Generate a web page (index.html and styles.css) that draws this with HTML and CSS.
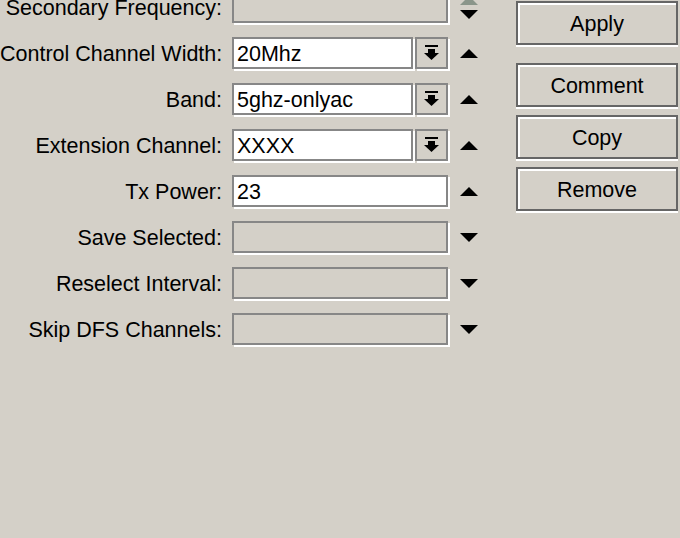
FILE: index.html
```html
<!DOCTYPE html>
<html lang="en">
<head>
    <meta charset="UTF-8">
    <meta name="viewport" content="width=device-width, initial-scale=1.0">
    <title>Wireless - Channels</title>
    <link rel="stylesheet" href="styles.css">
</head>
<body>
    <div class="dialog">
        <div class="fields">
            <div class="row">
                <span class="label">Secondary Frequency:</span>
                <div class="field disabled"></div>
                <div class="spin">
                    <svg class="tri off" viewBox="0 0 18 9"><path d="M9 0L18 9H0z"/></svg>
                    <svg class="tri" viewBox="0 0 18 9"><path d="M0 0H18L9 9z"/></svg>
                </div>
            </div>

            <div class="row">
                <span class="label">Control Channel Width:</span>
                <div class="combo">
                    <div class="field">20Mhz</div>
                    <div class="drop">
                        <svg class="drop-icon" viewBox="0 0 15 16"><rect x="1" y="0" width="13" height="2"/><rect x="4" y="4" width="7" height="4"/><path d="M0 8H15L7.5 15z"/></svg>
                    </div>
                </div>
                <div class="spin">
                    <svg class="tri" viewBox="0 0 18 9"><path d="M9 0L18 9H0z"/></svg>
                </div>
            </div>

            <div class="row">
                <span class="label">Band:</span>
                <div class="combo">
                    <div class="field">5ghz-onlyac</div>
                    <div class="drop">
                        <svg class="drop-icon" viewBox="0 0 15 16"><rect x="1" y="0" width="13" height="2"/><rect x="4" y="4" width="7" height="4"/><path d="M0 8H15L7.5 15z"/></svg>
                    </div>
                </div>
                <div class="spin">
                    <svg class="tri" viewBox="0 0 18 9"><path d="M9 0L18 9H0z"/></svg>
                </div>
            </div>

            <div class="row">
                <span class="label">Extension Channel:</span>
                <div class="combo">
                    <div class="field">XXXX</div>
                    <div class="drop">
                        <svg class="drop-icon" viewBox="0 0 15 16"><rect x="1" y="0" width="13" height="2"/><rect x="4" y="4" width="7" height="4"/><path d="M0 8H15L7.5 15z"/></svg>
                    </div>
                </div>
                <div class="spin">
                    <svg class="tri" viewBox="0 0 18 9"><path d="M9 0L18 9H0z"/></svg>
                </div>
            </div>

            <div class="row">
                <span class="label">Tx Power:</span>
                <div class="field">23</div>
                <div class="spin">
                    <svg class="tri" viewBox="0 0 18 9"><path d="M9 0L18 9H0z"/></svg>
                </div>
            </div>

            <div class="row">
                <span class="label">Save Selected:</span>
                <div class="field disabled"></div>
                <div class="spin">
                    <svg class="tri" viewBox="0 0 18 9"><path d="M0 0H18L9 9z"/></svg>
                </div>
            </div>

            <div class="row">
                <span class="label">Reselect Interval:</span>
                <div class="field disabled"></div>
                <div class="spin">
                    <svg class="tri" viewBox="0 0 18 9"><path d="M0 0H18L9 9z"/></svg>
                </div>
            </div>

            <div class="row">
                <span class="label">Skip DFS Channels:</span>
                <div class="field disabled"></div>
                <div class="spin">
                    <svg class="tri" viewBox="0 0 18 9"><path d="M0 0H18L9 9z"/></svg>
                </div>
            </div>
        </div>

        <div class="buttons">
            <button class="btn btn-apply">Apply</button>
            <button class="btn">Comment</button>
            <button class="btn">Copy</button>
            <button class="btn">Remove</button>
        </div>
    </div>
</body>
</html>
```

FILE: styles.css
```css
/* General Styles */
body {
    margin: 0;
    padding: 0;
    height: 538px;
    overflow: hidden;
    background-color: #d4d0c8;
    font-family: "Liberation Sans", Arial, sans-serif;
    font-size: 21.5px;
    color: #000;
}

.dialog {
    display: flex;
    align-items: flex-start;
}

/* Form rows */
.fields {
    display: flex;
    flex-direction: column;
    gap: 14px;
    margin-top: -9px;
}

.row {
    display: flex;
    align-items: center;
    height: 32px;
}

.label {
    width: 222px;
    padding-right: 10px;
    padding-top: 3px;
    text-align: right;
    white-space: nowrap;
}

.field {
    width: 216px;
    height: 32px;
    box-sizing: border-box;
    border: 2px solid #878787;
    box-shadow: 2px 2px 0 #fff;
    background-color: #fff;
    padding-left: 3px;
    line-height: 31px;
    white-space: nowrap;
}

.field.disabled {
    background-color: #d4d0c8;
}

/* Text field with drop-down button */
.combo {
    display: flex;
    gap: 2px;
    width: 216px;
}

.combo .field {
    width: 181px;
}

.drop {
    width: 33px;
    height: 32px;
    box-sizing: border-box;
    border: 2px solid #878787;
    box-shadow: 2px 2px 0 #fff;
    display: flex;
    align-items: center;
    justify-content: center;
}

.drop-icon {
    width: 15px;
    height: 16px;
    fill: #000;
}

/* Up / down arrows */
.spin {
    display: flex;
    flex-direction: column;
    gap: 5px;
    margin-left: 12px;
}

.tri {
    display: block;
    width: 18px;
    height: 9px;
    fill: #000;
}

.tri.off {
    fill: #8a958a;
}

/* Buttons */
.buttons {
    display: flex;
    flex-direction: column;
    gap: 8px;
    width: 162px;
    margin-left: 38px;
    margin-top: 1px;
}

.btn {
    height: 44px;
    padding: 2px 0 0;
    font: inherit;
    color: #000;
    background-color: #d4d0c8;
    border: 2px solid #666;
    box-shadow: inset 2px 2px 0 #fff, 0 2px 0 #fff;
}

.btn-apply {
    margin-bottom: 10px;
}
```
